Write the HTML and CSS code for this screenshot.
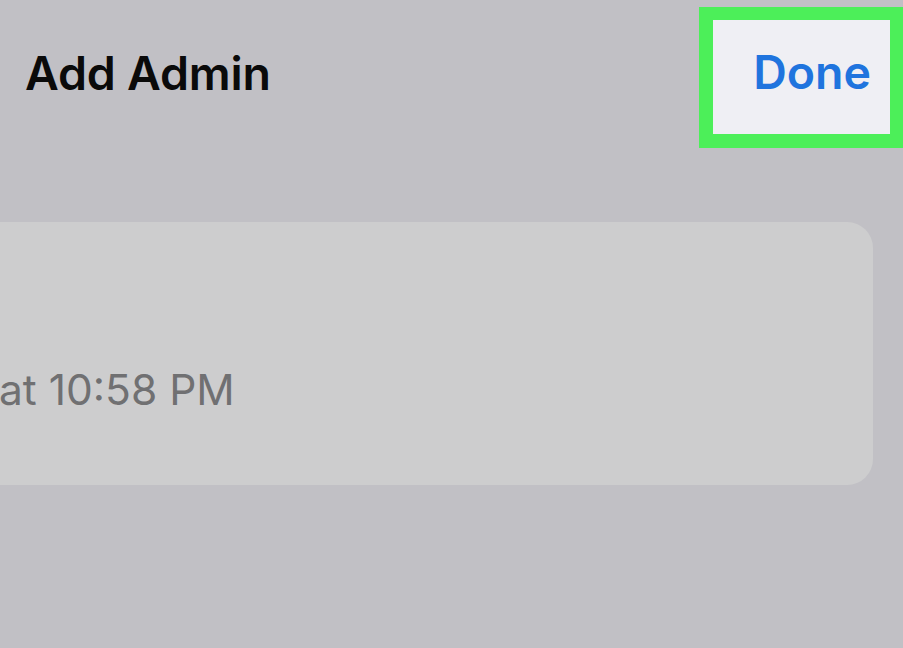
FILE: index.html
```html
<!DOCTYPE html>
<html lang="en">
<head>
<meta charset="utf-8">
<title>Add Admin</title>
<link rel="stylesheet" href="styles.css">
</head>
<body>
<div class="screen">
  <header class="navbar">
    <h1 class="title">Add Admin</h1>
    <div class="done-highlight">
      <button class="done-btn" type="button">Done</button>
    </div>
  </header>
  <section class="card">
    <p class="card-time">at 10:58 PM</p>
  </section>
</div>
</body>
</html>
```

FILE: styles.css
```css
* { box-sizing: border-box; }
html, body {
  margin: 0;
  padding: 0;
  width: 903px;
  height: 648px;
  overflow: hidden;
  background: #c1c0c5;
  font-family: "Inter", "Noto Sans", "Liberation Sans", sans-serif;
}
.screen {
  display: flex;
  flex-direction: column;
  width: 903px;
  height: 648px;
}
.navbar {
  display: flex;
  align-items: center;
  justify-content: space-between;
  padding-top: 7px;
  padding-left: 25px;
}
.title {
  margin: 0 0 10px 0;
  font-size: 46.5px;
  line-height: 56px;
  font-weight: 600;
  color: #0a0a0a;
  letter-spacing: -0.2px;
}
.done-highlight {
  width: 204px;
  height: 141px;
  border: 13px solid #4cef59;
  border-left-width: 14px;
  border-bottom-width: 14px;
  background: #efeff4;
  display: flex;
  align-items: center;
  justify-content: flex-end;
  padding-right: 19px;
}
.done-btn {
  border: 0;
  background: transparent;
  padding: 0;
  margin-bottom: 10px;
  font-family: inherit;
  font-size: 46.5px;
  line-height: 56px;
  font-weight: 600;
  color: #1f74de;
}
.card {
  margin-top: 74px;
  margin-left: -40px;
  width: 913px;
  height: 263px;
  background: #cdcdce;
  border-radius: 26px;
  padding-top: 142px;
  padding-left: 39px;
}
.card-time {
  margin: 0;
  font-size: 42.5px;
  font-weight: 400;
  color: #707072;
  line-height: 52px;
}
```
